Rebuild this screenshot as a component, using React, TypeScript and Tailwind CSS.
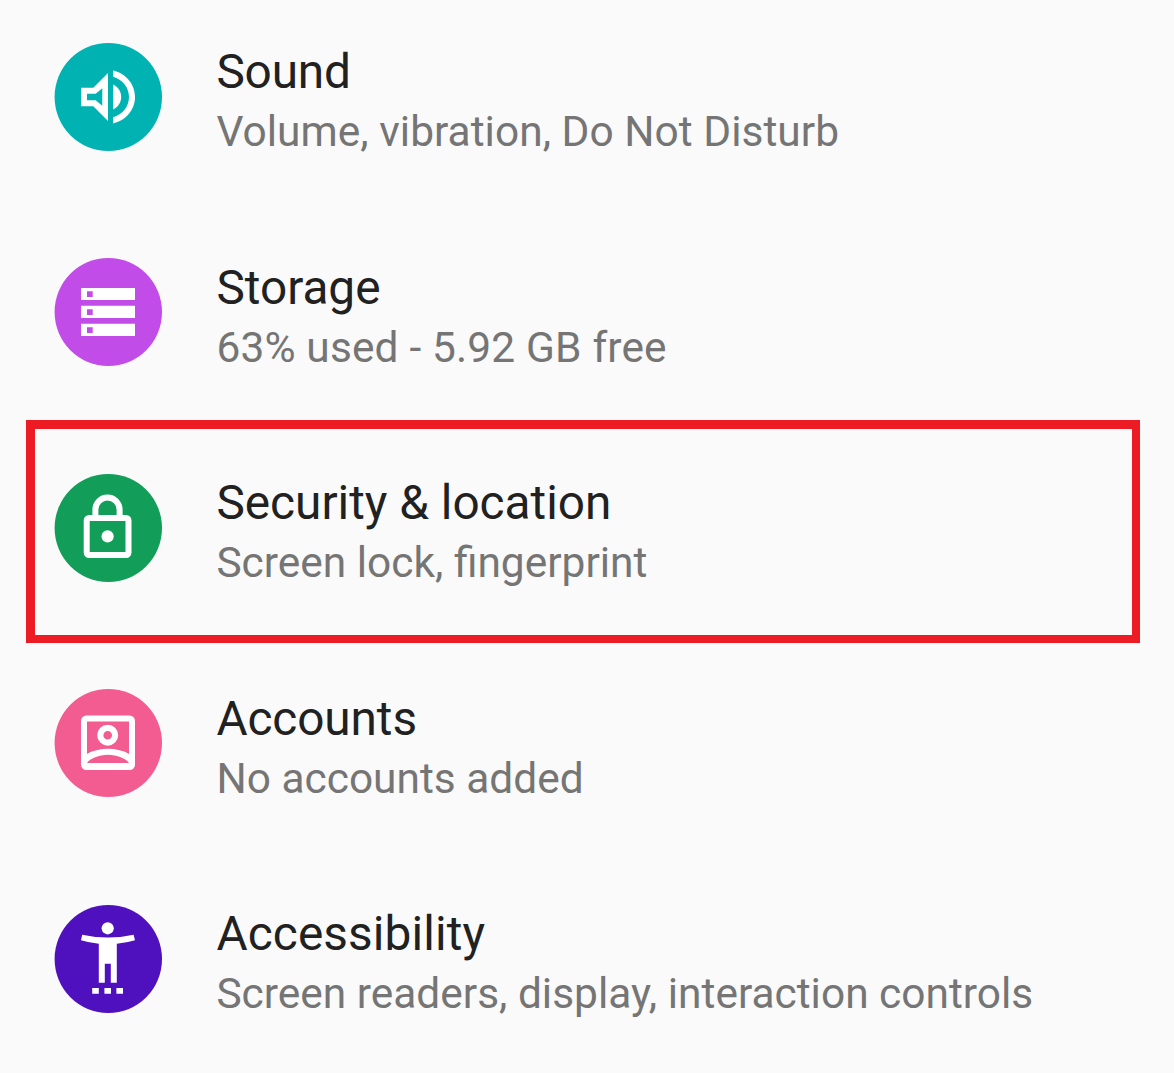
import React from "react";

type Item = {
  title: string;
  detail: string;
  color: string;
  icon: React.ReactNode;
  titleTracking?: string;
  detailTracking?: string;
  highlighted?: boolean;
};

const items: Item[] = [
  {
    title: "Sound",
    detail: "Volume, vibration, Do Not Disturb",
    color: "fill-[#00b3b2]",
    titleTracking: "tracking-[-0.15px]",
    detailTracking: "tracking-[0.03px]",
    icon: (
      <path
        fill="white"
        transform="translate(18 18) scale(3)"
        d="M3 8.9v6.2h4.1l4.9 4.9V4L7.1 8.9H3zm7.1 .2v5.8L7.9 13.1H5v-2.2h2.9L10.1 9.1zM16.4 12c0-1.77-1.02-3.4-2.7-4.15v8.3c1.68-.75 2.7-2.38 2.7-4.15zM13.7 3.2v2.06c3.1.86 5.3 3.54 5.3 6.74s-2.2 5.88-5.3 6.74v2.06c4.2-.91 7.3-4.52 7.3-8.8s-3.1-7.89-7.3-8.8z"
      />
    ),
  },
  {
    title: "Storage",
    detail: "63% used - 5.92 GB free",
    color: "fill-[#c24ce7]",
    detailTracking: "tracking-[0.16px]",
    icon: (
      <path
        fill="white"
        fillRule="evenodd"
        d="M27 30H81V42H27ZM33 33.3V39H38.7V33.3ZM27 47.7H81V60H27ZM33 51.3V57H38.7V51.3ZM27 65.7H81V78H27ZM33 69.3V75H38.7V69.3Z"
      />
    ),
  },
  {
    title: "Security & location",
    detail: "Screen lock, fingerprint",
    color: "fill-[#129e59]",
    highlighted: true,
    icon: (
      <g fill="none" stroke="white" strokeWidth="6">
        <rect x="32.7" y="44" width="41.8" height="37" rx="2.4" />
        <path d="M41.4 44V35.6A12.1 12.1 0 0 1 65.6 35.6V44" />
        <circle cx="53.6" cy="62.4" r="6.1" fill="white" stroke="none" />
      </g>
    ),
  },
  {
    title: "Accounts",
    detail: "No accounts added",
    color: "fill-[#f25c90]",
    titleTracking: "tracking-[-0.1px]",
    icon: (
      <g>
        <rect x="30" y="29.5" width="48" height="48.5" rx="2.4" fill="none" stroke="white" strokeWidth="6" />
        <circle cx="53.7" cy="46.2" r="7.4" fill="none" stroke="white" strokeWidth="6.2" />
        <path
          fill="white"
          fillRule="evenodd"
          d="M32 65.4C45 58 63 58 76 65.4V77H32ZM33 74H75C72 69.5 63 65.8 54 65.8S36 69.5 33 74Z"
        />
      </g>
    ),
  },
  {
    title: "Accessibility",
    detail: "Screen readers, display, interaction controls",
    color: "fill-[#4f10bd]",
    titleTracking: "tracking-[0.12px]",
    icon: (
      <g fill="white">
        <circle cx="53.7" cy="23.3" r="6.1" />
        <path d="M28.2 29.7Q54 35.5 79.6 29.7L81 35.3Q73 37.8 62.8 38.8V77.8H56.8V58.8H50.8V77.8H44.8V38.8Q35 37.8 27 35.3Z" />
        <path d="M38.2 83h6.6v5.8h-6.6zM50.4 83h6.6v5.8h-6.6zM62.4 83h6.6v5.8h-6.6z" />
      </g>
    ),
  },
];

export default function App() {
  return (
    <main className="h-[1073px] w-[1174px] overflow-hidden bg-[#fafafa] font-['Roboto',sans-serif]">
      <ul className="grid auto-rows-[215.4px]">
        {items.map((item) => (
          <li key={item.title} className="relative flex pl-[54px] pt-[43px]">
            {item.highlighted && (
              <div className="absolute left-[26px] top-[-10.8px] h-[223px] w-[1114px] border-8 border-l-9 border-t-9 border-[#ed1c24]" />
            )}
            <svg viewBox="0 0 108 108" className="size-[108px] shrink-0">
              <ellipse cx="54.3" cy="54" rx="53.7" ry="54" className={item.color} />
              {item.icon}
            </svg>
            <div className="ml-[54.4px] mt-[0.35px] whitespace-nowrap">
              <h2 className={`text-[47.75px] leading-[58px] text-[#212121] ${item.titleTracking ?? ""}`}>{item.title}</h2>
              <p className={`text-[42.45px] leading-[62.6px] text-[#757575] ${item.detailTracking ?? ""}`}>{item.detail}</p>
            </div>
          </li>
        ))}
      </ul>
    </main>
  );
}
